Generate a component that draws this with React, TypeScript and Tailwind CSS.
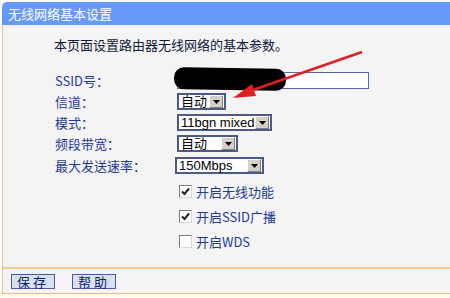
import React from 'react'

const cjk = { fontFamily: '"Noto Sans CJK SC", "Liberation Sans", sans-serif' }

function Select({ value, width }: { value: string; width: number }) {
  return (
    <div
      className="flex items-center h-[17px] border-2 border-[#4a5a8a] bg-white"
      style={{ width }}
    >
      <span className="flex-1 pl-[2px] text-[13px] leading-none text-black" style={{ fontFamily: '"Liberation Sans", "Noto Sans CJK SC", sans-serif' }}>
        {value}
      </span>
      <span className="w-[14px] h-[13px] mr-[1px] bg-[#d4d0c8] border-r border-b border-[#808080] border-t border-l border-t-white border-l-white flex items-center justify-center">
        <svg width="7" height="4" viewBox="0 0 7 4"><path d="M0 0h7L3.5 4z" fill="#000" /></svg>
      </span>
    </div>
  )
}

function Check({ checked, label }: { checked: boolean; label: string }) {
  return (
    <div className="flex items-center gap-[4px] h-[25px]">
      <span className="w-[13px] h-[13px] bg-white border border-[#7a7a7a] border-b-[#d8d8d8] border-r-[#d8d8d8] flex items-center justify-center">
        {checked && (
          <svg width="9" height="9" viewBox="0 0 9 9"><path d="M1 4.5l2.5 2.5L8 1.5" stroke="#222" strokeWidth="2" fill="none" /></svg>
        )}
      </span>
      <span className="text-[13px] text-[#1c3a94]" style={cjk}>{label}</span>
    </div>
  )
}

export default function App() {
  const labels = ['SSID号：', '信道：', '模式：', '频段带宽：', '最大发送速率：']
  return (
    <div className="w-[450px] h-[298px] bg-white relative overflow-hidden" style={cjk}>
      <div className="pt-[2px] pl-[2px]">
        <div className="h-[23px] bg-[#6699fa] rounded-tl-[5px] flex items-center pl-[6px] text-white text-[13px]">
          无线网络基本设置
        </div>
        <div className="border-l border-[#f3c08a] bg-[#f4f4f4] h-[242px] flex flex-col">
          <div className="h-[2px] bg-[#eef0fb]" />
          <div className="pl-[51px] pt-[10px] text-[13px] text-[#111838] leading-[16px]">
            本页面设置路由器无线网络的基本参数。
          </div>
          <div className="pl-[52px] pt-[17px] grid grid-cols-[122px_1fr] text-[13px] text-[#1c3a94]">
            <div className="h-[21px] flex items-center">{labels[0]}</div>
            <div className="h-[21px] flex items-center">
              <div className="w-[192px] h-[17px] border border-[#5a6aa8] bg-white" />
            </div>
            <div className="h-[21px] flex items-center">{labels[1]}</div>
            <div className="h-[21px] flex items-center"><Select value="自动" width={49} /></div>
            <div className="h-[21px] flex items-center">{labels[2]}</div>
            <div className="h-[21px] flex items-center"><Select value="11bgn mixed" width={95} /></div>
            <div className="h-[21px] flex items-center">{labels[3]}</div>
            <div className="h-[21px] flex items-center"><Select value="自动" width={61} /></div>
            <div className="h-[23px] flex items-center">{labels[4]}</div>
            <div className="h-[23px] flex items-center -ml-[2px]"><Select value="150Mbps" width={89} /></div>
          </div>
          <div className="pl-[176px] pt-[2px] flex flex-col">
            <Check checked label="开启无线功能" />
            <Check checked label="开启SSID广播" />
            <Check checked={false} label="开启WDS" />
          </div>
        </div>
        <div className="h-[2px] bg-[#f8c690]" />
        <div className="border-l border-[#f3c08a] bg-[#f4f4f4] h-[24px] flex items-center gap-[17px] pl-[8px]">
          <button className="h-[15px] px-[5px] bg-[#d8e0f6] border border-[#4a5a9a] text-[13px] leading-none text-[#10206a] tracking-[3px]" style={cjk}>保存</button>
          <button className="h-[15px] px-[5px] bg-[#d8e0f6] border border-[#4a5a9a] text-[13px] leading-none text-[#10206a] tracking-[3px]" style={cjk}>帮助</button>
        </div>
        <div className="h-[1px] bg-[#f3b890]" />
        <div className="h-[3px] bg-[#fffbe6]" />
      </div>

      {/* scribble over SSID */}
      <div className="absolute left-[174px] top-[68px] w-[112px] h-[22px] bg-black rounded-[10px] rotate-[1deg]" />
      {/* red arrow */}
      <svg className="absolute left-0 top-0" width="450" height="298">
        <line x1="362" y1="52" x2="250" y2="91" stroke="#e02020" strokeWidth="2.5" />
        <path d="M233 98 L252 84 L256 96 Z" fill="#e02020" />
      </svg>
    </div>
  )
}
